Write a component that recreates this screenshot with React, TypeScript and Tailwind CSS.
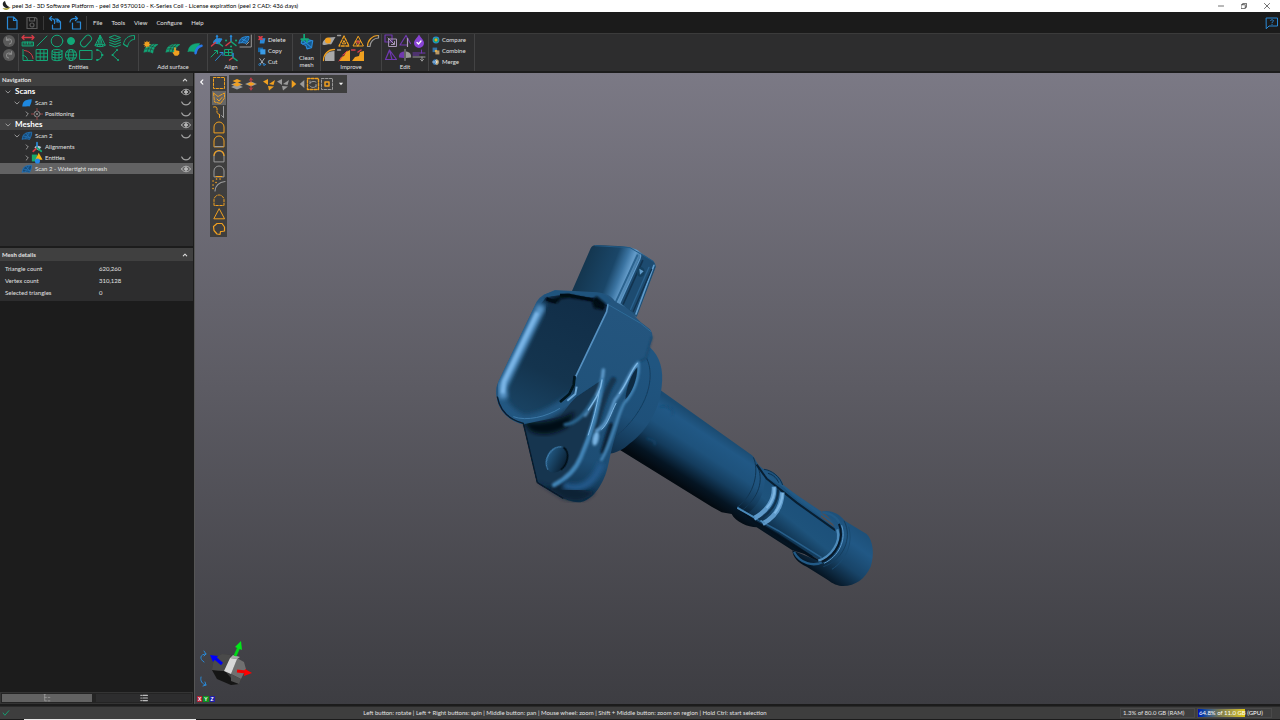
import { useState } from 'react';
import type { ReactNode } from 'react';

const GREEN = '#12a878';
const ORANGE = '#f0a020';
const BLUE = '#2a8ad8';
const GRAY = '#9a9a9a';
const RED = '#d83c48';
const PURPLE = '#7038b0';

type IconProps = { children: ReactNode; className?: string; color?: string; width?: number };

function Icon({ children, className = 'size-3.5', color = GREEN, width = 1 }: IconProps) {
	return (
		<svg
			aria-hidden="true"
			className={`${className} shrink-0`}
			fill="none"
			stroke={color}
			strokeLinecap="round"
			strokeLinejoin="round"
			strokeWidth={width}
			viewBox="0 0 14 14"
		>
			{children}
		</svg>
	);
}

type Tool = { name: string; icon: ReactNode };

const entityTools: Tool[] = [
	{
		name: 'Distance',
		icon: (
			<Icon>
				<path d="M1 3.500h12M3 1.500l-2 2 2 2M11 1.500l2 2-2 2" stroke={RED} strokeWidth="1.300" />
				<path d="M1.500 8h11v4h-11zM4 8v2M6.500 8v2M9 8v2" fill="#12a87855" />
			</Icon>
		)
	},
	{ name: 'Line', icon: <Icon><path d="M2 12L12 2" /></Icon> },
	{ name: 'Circle', icon: <Icon><circle cx="7" cy="7" r="5.800" /></Icon> },
	{ name: 'Point', icon: <Icon><circle cx="7" cy="7" fill={GREEN} r="3.500" /></Icon> },
	{
		name: 'Slot',
		icon: <Icon><rect height="6.800" rx="3.400" transform="rotate(-48 7 7)" width="13" x=".5" y="3.600" /></Icon>
	},
	{ name: 'Cone', icon: <Icon><path d="M7 1.500L2 11.500c2 1.600 8 1.600 10 0zM7 1.500v11M7 1.500L4.500 12M7 1.500L9.500 12M2 11c3-1 7-1 10 0" /></Icon> },
	{ name: 'Planes', icon: <Icon><path d="M7 1.500l5.500 2L7 5.500 1.500 3.500zM1.500 6L7 8l5.500-2M1.500 8.500L7 10.500l5.500-2M1.500 11L7 13l5.500-2" /></Icon> },
	{ name: 'Curve', icon: <Icon><path d="M1.500 10C2.500 4.500 6 1.500 12.500 1.500v4C9 5.500 6.500 8 5.500 12.500zM1.500 10l4 2.500" /></Icon> },
	{
		name: 'Angle',
		icon: (
			<Icon>
				<path d="M2 1.500v11h10M2 7.500c2.500 0 4.500 2 4.500 5" />
				<path d="M3.500 2.500C8 3 11.500 6 12 10.500" stroke={RED} />
			</Icon>
		)
	},
	{ name: 'Grid', icon: <Icon><path d="M1.500 1.500h11v11h-11zM5.200 1.500v11M8.900 1.500v11M1.500 5.200h11M1.500 8.900h11" /></Icon> },
	{ name: 'Cylinder', icon: <Icon><path d="M2 3v8.500c2 1.600 8 1.600 10 0V3M2 6c2 1.400 8 1.400 10 0M2 9c2 1.400 8 1.400 10 0M5 4v8.500M9 4v8.500" /><ellipse cx="7" cy="3" rx="5" ry="1.500" /></Icon> },
	{ name: 'Sphere', icon: <Icon><circle cx="7" cy="7" r="5.600" /><ellipse cx="7" cy="7" rx="2.500" ry="5.600" /><path d="M1.400 7h11.200M2.400 4h9.200M2.400 10h9.200" /></Icon> },
	{ name: 'Rectangle', icon: <Icon><path d="M1 2.500h12v9H1z" /></Icon> },
	{ name: 'Arc', icon: <Icon><path d="M4.500 2c6 1 6 9 0 10" /><path d="M4 2h.5M9 7h.5M4 12h.5" strokeWidth="2" /></Icon> },
	{ name: 'Polyline', icon: <Icon><path d="M9 2L4.500 7 10 12" /><path d="M9 2h.1M4.500 7h.1M10 12h.1" strokeWidth="2" /></Icon> }
];

const patch = 'M1 10.500C1.500 5.500 5 3 13 4c-2.500 1-4 4-4.500 7.500-2-1.500-5-1.500-7.500-1z';
const patchLines = 'M2 8c3-.7 5-.2 7 .8M3.500 5.500c3-.5 5 0 7 1M3.700 10.500c.5-3 2-5.500 4.500-7M6.200 10.500c.5-3 2-5.500 4.500-7';

const surfaceTools: Tool[] = [
	{
		name: 'Auto surface',
		icon: (
			<Icon className="size-4" width={0.5}>
				<path d={patch} fill={GREEN} />
				<path d={patchLines} stroke="#2d2d2e" />
				<path d="M3.500.500l.7 1.500 1.700-.8-.6 1.800 1.600.7-1.600.8.5 1.700-1.700-.7-.8 1.500-.7-1.600-1.600.5.700-1.600L0 3.700l1.700-.7-.6-1.700 1.600.7z" fill={ORANGE} stroke="none" />
			</Icon>
		)
	},
	{
		name: 'Manual surface',
		icon: (
			<Icon className="size-4" width={0.5}>
				<path d={patch} fill={GREEN} />
				<path d={patchLines} stroke="#2d2d2e" />
				<path d="M8 6.500h1.500v2.500l3 .7v2.500l-1.500 1.500H8.500L6.500 11l1.500-.5z" fill={ORANGE} stroke="none" />
			</Icon>
		)
	},
	{
		name: 'Surface edge',
		icon: (
			<Icon className="size-4">
				<path d="M1 10C1.500 5.500 4 3 11 3L8 11c-2-1-5-1.500-7-1z" fill={GREEN} strokeWidth="0.500" />
				<path d="M7.500 11.500C8 8 10 5.500 12.700 5" stroke="#2878e8" strokeWidth="2.200" />
			</Icon>
		)
	}
];

const alignTools: Tool[] = [
	{
		name: 'Best fit',
		icon: (
			<Icon>
				<path d="M3.500 8.500C4 5 7 4 12 5L9 9.500z" fill={BLUE} stroke={BLUE} />
				<path d="M7 2v6" stroke={BLUE} strokeWidth="1.500" /><path d="M5.500 8.500L1.500 12" stroke={RED} strokeWidth="1.500" /><path d="M8.500 9l4 3" strokeWidth="1.500" />
				<path d="M5.500 3L7 .500 8.500 3z" fill={BLUE} stroke="none" />
			</Icon>
		)
	},
	{
		name: 'Datum',
		icon: (
			<Icon>
				<path d="M7 2v5.500" stroke={BLUE} strokeWidth="1.500" /><path d="M7 7.500l-5 4" stroke={RED} strokeWidth="1.500" /><path d="M7 7.500l5 4" stroke={GREEN} strokeWidth="1.500" />
				<path d="M2 6.500h.1M12 6.500h.1M7 12.500h.1" stroke={GREEN} strokeWidth="2" /><path d="M5.500 3L7 .500 8.500 3z" fill={BLUE} stroke="none" />
			</Icon>
		)
	},
	{
		name: 'Mesh alignment',
		icon: (
			<Icon color={BLUE}>
				<path d="M1 9C1.500 4.500 4 2.500 11 2.500c0 3-1 5-3 7-2-1-4-1-7-.5zM4 5l5 2.500M3.500 8.500l5-5" fill="#1c5c94" />
				<path d="M13.300 1v12H2M8.500 10.500l2.500-2.500" stroke={GRAY} />
			</Icon>
		)
	},
	{
		name: 'Vectors',
		icon: (
			<Icon>
				<path d="M1 9L7 3M4.500 2.500H7.500v3" />
				<path d="M5.500 12.500l7-7.500M10 4.500h3v3" stroke={BLUE} />
			</Icon>
		)
	},
	{
		name: 'Grid alignment',
		icon: (
			<Icon>
				<path d="M1 1.500h7v6H1zM4.500 1.500v6M1 4.500h7" />
				<path d="M9 5.500v4" stroke={BLUE} strokeWidth="1.500" /><path d="M9 9.500L5.500 12" stroke={RED} strokeWidth="1.500" /><path d="M9 9.500l4 3" strokeWidth="1.500" />
			</Icon>
		)
	}
];

const improveTools: Tool[] = [
	{ name: 'Defeature', icon: <Icon><path d="M.5 10.500C.5 6 4 3 13.500 3c-2 3-3 6-4.500 7.500-3-1-5 1.500-8.500 0z" fill="#a5a5a5" stroke="none" /><circle cx="6" cy="6.500" fill={ORANGE} r="3" stroke="none" /></Icon> },
	{ name: 'Decimate', icon: <Icon><path d="M7 2L2 12h10z" stroke={ORANGE} strokeDasharray="3 1.500" strokeWidth="1.300" /><path d="M5.500 9.500L7 6.500l1.500 3z" stroke={ORANGE} /><path d="M.5 1.500h3" stroke={GRAY} strokeWidth="1.500" /></Icon> },
	{ name: 'Refine', icon: <Icon color={ORANGE}><path d="M7 2.500L2 12h10zM4.500 7.200h5L7 12z" /><path d="M7 6.500v3M5.500 8h3" stroke={RED} /></Icon> },
	{ name: 'Smooth', icon: <Icon color={ORANGE} width={1.2}><path d="M1.500 12.500C1.500 6.500 6 1.500 12.500 1.500" /><path d="M4 12.500c0-5 4-8.500 8.500-8.500M1.500 12.500H4M12.500 1.500V4" stroke={GRAY} /></Icon> },
	{ name: 'Fill', icon: <Icon><path d="M3 13V9c0-3 4-6 9.500-6v10z" fill="#a8a8a8" stroke="none" /><path d="M1.500 12.500C1.500 6.500 6 1.500 12.500 1.500" stroke={ORANGE} strokeWidth="1.300" /></Icon> },
	{ name: 'Extrude', icon: <Icon><path d="M2 13l2-4 3-1 2-4 4-2v11z" fill={ORANGE} stroke="none" /><path d="M.5 2h3" stroke={GRAY} strokeWidth="1.500" /><path d="M6 7l4-4M6 7l1.500-.2M2 13l3-4" stroke={RED} /></Icon> },
	{ name: 'Offset', icon: <Icon><path d="M1 13l3-4 4-1 1-4 4-1v10z" fill={ORANGE} stroke="none" /><path d="M.5 2h3.500M7 4l3-2" stroke={RED} strokeWidth="1.500" /></Icon> }
];

const editTools: Tool[] = [
	{ name: 'Scale', icon: <Icon color={PURPLE} width={1.2}><path d="M1 1h7v7H1z" /><path d="M5 5h7.500v7.500H5zM4 4l6 6M7.500 10.500h3v-3" stroke="#a896b8" strokeWidth="1" /></Icon> },
	{ name: 'Cut plane', icon: <Icon color={PURPLE} width={1.2}><path d="M8 1.500L2 11h7M8 1.500l4.500 8" /><path d="M9.500 4.500v8" stroke="#b0a0bc" /></Icon> },
	{ name: 'Watertight', icon: <Icon><path d="M7 .500C9 4 12 6 12 9a5 5 0 0 1-10 0C2 6 5 4 7 .500z" fill="#8844d4" stroke="none" /><path d="M5 8.500L6.500 10 9 7" stroke="#fff" strokeWidth="1.300" /></Icon> },
	{ name: 'Remesh', icon: <Icon color={PURPLE} width={1.2}><path d="M5.500 2L1.500 11.500h11zM5.500 2l2.500 9.500" /></Icon> },
	{ name: 'Mirror', icon: <Icon><path d="M6 3.500C2 4 .5 6.500 1 9.500L6 10z" fill={PURPLE} stroke="none" /><path d="M8 3.500c4 .5 5.500 3 5 6L8 10z" fill={GRAY} stroke="none" /><path d="M7 1.500v11" stroke={GRAY} /></Icon> },
	{ name: 'Shell', icon: <Icon color={PURPLE}><path d="M1 5h12M9.500 2v3M1 7h6" /><path d="M1 9h12M10 9v4M8.500 11.500L10 13l1.500-1.500" stroke={GRAY} /></Icon> }
];

const clipboard: Tool[] = [
	{ name: 'Delete', icon: <Icon className="size-2"><path d="M4 4h9l-2 9H3z" fill={BLUE} stroke="none" /><path d="M2 1l5 5M7 1L2 6" stroke={RED} strokeWidth="3" /></Icon> },
	{ name: 'Copy', icon: <Icon className="size-2"><path d="M0 1h9v8H0z" fill="#1868a8" stroke="none" /><path d="M4 4h9v9H4z" fill="#3a9ce8" stroke="none" /></Icon> },
	{ name: 'Cut', icon: <Icon className="size-2" color="#c0c8d0" width={1.5}><path d="M3 1l6.500 9M11 1L4.500 10" /><circle cx="3" cy="11.500" r="1.700" stroke={BLUE} /><circle cx="11" cy="11.500" r="1.700" stroke={BLUE} /></Icon> }
];

const combineTools: Tool[] = [
	{ name: 'Compare', icon: <Icon className="size-2"><circle cx="7" cy="7" fill={BLUE} r="6" stroke="none" /><circle cx="7" cy="7" fill={GREEN} r="4.500" stroke="none" /><circle cx="7" cy="7" fill={ORANGE} r="2.500" stroke="none" /></Icon> },
	{ name: 'Combine', icon: <Icon className="size-2"><path d="M1 1h8v8H1z" fill="#3272a8" stroke="none" /><path d="M6 6h7v7H6z" fill="#b89868" stroke="none" /><path d="M5 5h4v4H5z" fill="#e0b050" stroke="none" /></Icon> },
	{ name: 'Merge', icon: <Icon className="size-2"><circle cx="6" cy="7" fill="#3c7cb8" r="5" stroke="none" /><path d="M7 2a5 5 0 0 1 0 10z" fill="#c0a878" stroke="none" /><path d="M1 7h8M6 4l3 3-3 3" stroke="#fff" /></Icon> }
];

const arch = 'M2 12.500V7a5 5 0 0 1 10 0v5.500z';

const selectTools: Tool[] = [
	{ name: 'Rectangle selection', icon: <Icon color={ORANGE}><path d="M1.500 1.500h11v11h-11z" strokeDasharray="2.500 1.500" /></Icon> },
	{ name: 'Freeform selection', icon: <Icon color={ORANGE}><path d="M1.500 2l4.500 3.500L12.500 2v5l-4 5.500-6-1.500z" strokeDasharray="2.500 1.200" /><path d="M5 8l2 2 3-3.500" /></Icon> },
	{ name: 'Path selection', icon: <Icon color={ORANGE}><path d="M1.500 2c3-1 4 1 3.500 3.500S6 9 7.500 9.500" strokeDasharray="2.500 1" /><path d="M7.500 9.500v3" /><path d="M11.500 1.500v11M9.500 10.500l2 2" stroke={GRAY} /></Icon> },
	{ name: 'Select front', icon: <Icon color={ORANGE}><path d={arch} /></Icon> },
	{ name: 'Select through', icon: <Icon color={ORANGE}><path d={arch} /><path d="M3 12.500h8" stroke={GRAY} /></Icon> },
	{ name: 'Select top', icon: <Icon color={GRAY}><path d={arch} /><path d="M2 6.500a5 5 0 0 1 10 0" stroke={ORANGE} strokeWidth="1.200" /></Icon> },
	{ name: 'Select base', icon: <Icon color={GRAY}><path d={arch} /><path d="M4 12.500h6" stroke={ORANGE} /></Icon> },
	{ name: 'Select by curvature', icon: <Icon color={GRAY} width={1.2}><path d="M3 13c0-5 4-9 10-9.500" /><path d="M1 3h.1M4.500 1h.1M8 1h.1M1 7h.1M4 4.500h.1M1 10.500h.1" stroke={ORANGE} strokeWidth="1.600" /></Icon> },
	{ name: 'Select boundary', icon: <Icon color={ORANGE}><path d={arch} strokeDasharray="2.500 1.500" /></Icon> },
	{ name: 'Select triangle', icon: <Icon color={ORANGE}><path d="M7 2L1.800 11.800h10.400z" /></Icon> },
	{ name: 'Select component', icon: <Icon color={ORANGE} width={1.2}><path d="M8 12.500l-3-.5-3-3.500L1.500 4.500 5 1.500h5L12.500 5v4L10 9.500H8.500z" /></Icon> }
];

const viewTools: Tool[] = [
	{ name: 'Expand layers', icon: <Icon><path d="M1 7.500L7 5l6 2.500L7 10zM1 10L7 7.500 13 10l-6 2.500z" fill={GRAY} stroke="none" /><path d="M2.500 4L7 2l4.500 2L7 6zM2.500 7.500L7 5.500l4.500 2-4.500 2z" fill={ORANGE} stroke="none" /></Icon> },
	{ name: 'Shrink layers', icon: <Icon><path d="M1 7l6-2.500L13 7l-6 2.500z" fill={GRAY} stroke="none" /><path d="M3 7l4-2 4 2-4 2z" fill={ORANGE} stroke="none" /><path d="M7 1v4M5.500 3L7 1.500 8.500 3M7 9v4M5.500 11L7 12.500 8.500 11" stroke={RED} /></Icon> },
	{ name: 'Grow', icon: <Icon><path d="M1 4.500L6 2v6zM7 7l6-4-1.500 5zM6 9l6 .5-5 4z" fill={ORANGE} stroke="none" /></Icon> },
	{ name: 'Reduce', icon: <Icon><path d="M1 4.500L6 2v6zM7 7l6-4-1.500 5zM6 9l6 .5-5 4z" fill={GRAY} stroke="none" /></Icon> }
];

const menus = ['File', 'Tools', 'View', 'Configure', 'Help'];

function ToolButton({ tool }: { tool: Tool }) {
	return (
		<button aria-label={tool.name} className="flex items-center justify-center hover:bg-white/10" type="button">
			{tool.icon}
		</button>
	);
}

function Group({ label, className, children }: { label?: string; className: string; children: ReactNode }) {
	return (
		<section className={`flex flex-col items-center border-r border-[#434344] ${className}`}>
			{children}
			{label && <h2 className="mt-auto text-[6px] leading-2">{label}</h2>}
		</section>
	);
}

function TitleBar() {
	return (
		<header className="flex h-3 items-center bg-white pl-px text-black">
			<svg aria-hidden="true" className="size-2.5" viewBox="0 0 10 10">
				<path d="M4 0C1 1 1 5 4 6.500 6 7.500 8 7 9.500 6 6.500 6 5 3.500 4 0z" fill="#222" />
				<path d="M1.500 7c2 3 6 2.500 8-1C7 7.500 4 7.500 1.500 7z" fill="#a9a030" />
			</svg>
			<h1 className="pl-px text-[6px] leading-3">
				peel 3d - 3D Software Platform - peel 3d 9570010 - K-Series Coil - License expiration (peel 2 CAD: 436 days)
			</h1>
			<div className="ml-auto flex gap-[17px] pr-2.5">
				<button aria-label="Minimize" type="button"><Icon className="size-1.5" color="#222" width={1.5}><path d="M1 7h12" /></Icon></button>
				<button aria-label="Restore" type="button"><Icon className="size-1.5" color="#222" width={1.5}><path d="M1 4h9v9H1zM4 4V1h9v9h-3" /></Icon></button>
				<button aria-label="Close" type="button"><Icon className="size-1.5" color="#222" width={1.5}><path d="M1 1l12 12M13 1L1 13" /></Icon></button>
			</div>
		</header>
	);
}

function MenuBar() {
	return (
		<nav className="flex h-[21px] items-center bg-[#1b1b1b] pl-[5px]">
			<button aria-label="New" type="button"><Icon color={BLUE} width={1.2}><path d="M2.500 1h6l3.500 3.500V13h-9.500zM8.500 1v3.500H12" /></Icon></button>
			<button aria-label="Save" className="ml-1.5" type="button"><Icon color="#5a5a5a" width={1.2}><path d="M2 1.500h8.500L12 3v9.500H2zM4.500 1.500v3.500h5v-3.500" /><circle cx="7" cy="9" r="2" /></Icon></button>
			<span className="mx-1 h-3.5 w-px bg-[#3a3a3a]" />
			<button aria-label="Import" type="button"><Icon color={BLUE} width={1.2}><path d="M7 3h2.500L12.500 6v7H4.500V9M9 3v3h3.500" /><path d="M6.500 7.500c1-4-1-5-4.500-5M3.500.500l-2 2 2 2" /></Icon></button>
			<button aria-label="Export" className="ml-1.5" type="button"><Icon color={BLUE} width={1.2}><path d="M9 6h3.500v7H4.500V7" /><path d="M2 6c0-3 3-4 7-3.500M7.500.500l2 2-2 2" /></Icon></button>
			<span className="mx-1 h-3.5 w-px bg-[#3a3a3a]" />
			<ul className="flex gap-[9px] pl-0.5 text-[6px]">
				{menus.map(menu => (
					<li key={menu}><button type="button">{menu}</button></li>
				))}
			</ul>
			<button aria-label="Help and feedback" className="ml-auto pr-px" type="button">
				<Icon color={BLUE}><path d="M1.500 2h11v8H4l-2.500 2.500z" /><path d="M5.500 4.500c0-1 3-1 3 .3 0 1-1.500.7-1.500 2M7 8.500h.1" /></Icon>
			</button>
		</nav>
	);
}

function Ribbon() {
	return (
		<div className="flex h-[38px] border-t border-[#3b3b3b] bg-[#2d2d2e]">
			<div className="flex w-[19px] flex-col items-center gap-0.5 border-r border-[#434344] pt-px">
				{['Undo', 'Redo'].map(name => (
					<button aria-label={name} className="size-3 rounded-full bg-[#5a5a5a]" key={name} type="button">
						<Icon className={name === 'Redo' ? 'size-3 -scale-x-100' : 'size-3'} color="#8c8c8c" width={1.2}>
							<path d="M4 3v3h3M4 6c2-2.500 6-1.500 6 1.500 0 1.500-1 2.500-2.500 3" />
						</Icon>
					</button>
				))}
			</div>
			<Group className="w-[120px]" label="Entities">
				<div className="grid w-[116px] grid-cols-8">
					{entityTools.map(tool => <ToolButton key={tool.name} tool={tool} />)}
				</div>
			</Group>
			<Group className="w-[69px]" label="Add surface">
				<div className="flex gap-1.5 pt-1.5">
					{surfaceTools.map(tool => <ToolButton key={tool.name} tool={tool} />)}
				</div>
			</Group>
			<Group className="w-[47px]" label="Align">
				<div className="grid w-[43px] grid-cols-3">
					{alignTools.map(tool => <ToolButton key={tool.name} tool={tool} />)}
				</div>
			</Group>
			<Group className="w-[38px]">
				<TextTools tools={clipboard} />
			</Group>
			<Group className="w-7">
				<button className="flex flex-col items-center text-[6px] leading-[7px]" type="button">
					<Icon className="size-4" color={BLUE}>
						<path d="M2 8c0-4 4-4 10-2l-1 6-4 1-1-3zM4 6l6 5M3 9l7-3" fill="#15588e" />
						<path d="M4.500 0v5M2 4.500h6M3 6V5h4v2" stroke={GREEN} strokeWidth="1.500" />
					</Icon>
					<span className="mt-1 w-6">Clean mesh</span>
				</button>
			</Group>
			<Group className="w-[61px]" label="Improve">
				<div className="grid w-[58px] grid-cols-4">
					{improveTools.map(tool => <ToolButton key={tool.name} tool={tool} />)}
				</div>
			</Group>
			<Group className="w-[47px]" label="Edit">
				<div className="grid w-[43px] grid-cols-3">
					{editTools.map(tool => <ToolButton key={tool.name} tool={tool} />)}
				</div>
			</Group>
			<Group className="w-[46px]">
				<TextTools tools={combineTools} />
			</Group>
		</div>
	);
}

function TextTools({ tools }: { tools: Tool[] }) {
	return (
		<ul className="w-full pl-[3px] text-[6px] leading-[11px]">
			{tools.map(tool => (
				<li key={tool.name}>
					<button className="flex items-center gap-0.5" type="button">
						{tool.icon}
						{tool.name}
					</button>
				</li>
			))}
		</ul>
	);
}

type Node = { label: string; icon?: ReactNode; depth: number; open?: boolean; eye?: 'open' | 'closed'; style?: string };

const meshIcon = (
	<Icon className="size-3" color="#2472b4">
		<path d="M1.500 10.500C2 5 4 3 12.500 2.500c0 3-1 6-2.500 8.500-3-1-5-.5-8.500-.5zM3 7l7 2M6 4l4 5M5 10l5-7" fill="#174c7a" />
	</Icon>
);

const nodes: Node[] = [
	{ label: 'Scans', depth: 0, open: true, eye: 'open' },
	{
		label: 'Scan 2',
		depth: 1,
		open: true,
		eye: 'closed',
		icon: <Icon className="size-3"><path d="M1.500 11C2 6 3 3 12.500 2.500c0 3-1 6-2.500 8.500-3-1-5 .5-8.500 0z" fill="#1e88e0" stroke="none" /></Icon>
	},
	{
		label: 'Positioning',
		depth: 2,
		open: false,
		eye: 'closed',
		icon: <Icon className="size-3" color="#888"><circle cx="7" cy="7" r="3.500" /><path d="M5.500 5.500l3 3M8.500 5.500l-3 3" /><path d="M7 .500v3M7 10.500v3M.500 7h3M10.500 7h3" stroke="#a84848" /></Icon>
	},
	{ label: 'Meshes', depth: 0, open: true, eye: 'open', style: 'bg-[#424243]' },
	{ label: 'Scan 2', depth: 1, open: true, eye: 'closed', icon: meshIcon },
	{
		label: 'Alignments',
		depth: 2,
		open: false,
		icon: <Icon className="size-3"><path d="M4 8c1-3 4-3 8-1L9 11z" fill="#b8c4d0" stroke="none" /><path d="M7 2v6" stroke={BLUE} strokeWidth="2" /><path d="M7 8l-4.500 4" stroke={RED} strokeWidth="2" /><path d="M7 8l5 4" stroke={GREEN} strokeWidth="2" /></Icon>
	},
	{
		label: 'Entities',
		depth: 2,
		open: false,
		eye: 'closed',
		icon: <Icon className="size-3"><path d="M1 3h6v8H1z" fill="#18a86c" stroke="none" /><path d="M9 1l4.500 8H5z" fill="#f8b418" stroke="none" /><circle cx="7.500" cy="10.500" fill="#2488e8" r="3" stroke="none" /></Icon>
	},
	{ label: 'Scan 2 - Watertight remesh', depth: 1, eye: 'open', icon: meshIcon }
];

const indents = ['pl-1', 'pl-[13px]', 'pl-[23px]'];

function Chevron({ open }: { open?: boolean }) {
	if (open === undefined) return <span className="w-2" />;
	return (
		<Icon className="mx-px size-1.5" color="#a8a8a8" width={2}>
			<path d={open ? 'M2 4.500l5 5 5-5' : 'M5 2l5 5-5 5'} />
		</Icon>
	);
}

function TreeRow({ node, selected, onSelect }: { node: Node; selected: boolean; onSelect: () => void }) {
	const background = selected ? 'bg-[#626263]' : (node.style ?? '');
	return (
		<li className={`flex h-[11px] items-center pr-0.5 ${indents[node.depth]} ${background}`}>
			<Chevron open={node.open} />
			<button
				className={`flex flex-1 items-center gap-0.5 text-left leading-[11px] ${node.depth === 0 ? 'pl-[3px] text-[8px] font-bold text-white' : 'text-[6px]'}`}
				onClick={onSelect}
				type="button"
			>
				{node.icon}
				{node.label}
			</button>
			{node.eye && (
				<button aria-label="Toggle visibility" type="button">
					<Icon className="size-2.5" color={node.eye === 'open' ? '#b8b8b8' : '#a0a0a0'} width={1.3}>
						{node.eye === 'open' ? (
							<>
								<path d="M.700 7C3.500 1.800 10.500 1.800 13.300 7 10.500 12.200 3.500 12.200.700 7z" />
								<circle cx="7" cy="7" fill="#b8b8b8" r="2" />
							</>
						) : (
							<path d="M1 5.500c2.500 5.500 9.500 5.500 12 0" strokeWidth="1.600" />
						)}
					</Icon>
				</button>
			)}
		</li>
	);
}

function PanelHeader({ title }: { title: string }) {
	return (
		<div className="flex h-[13px] items-center justify-between bg-[#404040] pr-[5px] pl-0.5">
			<h2 className="text-[6px] leading-3 font-bold">{title}</h2>
			<button aria-label={`Collapse ${title}`} className="flex" type="button">
				<Icon className="size-1.5" color="#ddd" width={2.5}><path d="M3 9l4-4 4 4" /></Icon>
			</button>
		</div>
	);
}

const details = [
	['Triangle count', '620,260'],
	['Vertex count', '310,128'],
	['Selected triangles', '0']
];

function Sidebar() {
	const [selected, setSelected] = useState(7);

	return (
		<aside className="flex w-[193px] shrink-0 flex-col">
			<section className="h-[173px] bg-[#2d2d2e]">
				<PanelHeader title="Navigation" />
				<ul>
					{nodes.map((node, i) => (
						<TreeRow key={i} node={node} onSelect={() => setSelected(i)} selected={selected === i} />
					))}
				</ul>
			</section>
			<section className="mt-0.5 bg-[#2d2d2e] pb-0.5">
				<PanelHeader title="Mesh details" />
				<table className="mt-0.5 w-full text-[6px] leading-3">
					<tbody>
						{details.map(([label, value]) => (
							<tr key={label}>
								<th className="w-[99px] py-0 pl-[5px] text-left font-normal" scope="row">{label}</th>
								<td>{value}</td>
							</tr>
						))}
					</tbody>
				</table>
			</section>
			<div className="mt-auto flex h-3 gap-1 border border-[#343434] bg-[#242424] p-px">
				<button aria-label="Tree view" className="flex w-[90px] items-center justify-center bg-[#626262]" type="button">
					<Icon className="size-2" color="#999" width={1.5}><path d="M3 1v11h3M3 6h3M9 6h3M9 12h3M2 1h2" /></Icon>
				</button>
				<button aria-label="List view" className="flex flex-1 items-center justify-center bg-[#2d2d2e]" type="button">
					<Icon className="size-2" color="#bbb" width={2}><path d="M1.500 2.500h1M5 2.500h8M1.500 7h1M5 7h8M1.500 11.500h1M5 11.500h8" /></Icon>
				</button>
			</div>
		</aside>
	);
}

function Shaft() {
	return (
		<g transform="translate(640 370) scale(.3333)">
			<path d="M-60 -30L65 63L335 255C350 268 345 280 372 298C400 303 425 320 430 348L470 375L545 425L520 560L457 541L350 472C325 472 285 455 275 432L245 427L215 410L-60 240Z" fill="url(#tube)" />
			<path d="M340 262C358 300 345 375 290 413M350 284C375 330 355 385 305 422" fill="none" stroke="#113552" strokeWidth="3" />
			<path d="M375 320C375 370 355 410 315 435L345 455L370 465L415 490L540 572C580 550 600 510 588 475L475 392L430 352Z" fill="url(#window)" />
			<path d="M350 284L380 326L425 362L470 398L588 482" fill="none" stroke="#081e31" strokeWidth="6" />
			<path d="M378 314L430 348L472 380L588 465" fill="none" stroke="#235a85" strokeWidth="5" />
			<path d="M290 412L345 455L405 492L540 577" fill="none" stroke="#04121f" strokeWidth="7" />
			<path d="M292 412L350 447L415 482L545 563" fill="none" stroke="#275f8b" strokeWidth="5" />
			<path d="M372 298C395 300 420 320 428 345M384 310C403 315 412 328 416 338" fill="none" stroke="#0d304c" strokeWidth="3" />
			<g fill="none" filter="url(#soft1)" stroke="#5f9aca">
				<path d="M402 350C405 390 380 425 342 445" strokeWidth="14" />
				<path d="M427 367C425 408 405 442 368 461" strokeWidth="14" />
			</g>
			<g fill="none" filter="url(#soft1)" stroke="#7db6e3" strokeWidth="6">
				<path d="M403 352C405 378 394 398 380 414" />
				<path d="M428 369C427 395 416 414 404 430" />
			</g>
			<path d="M414 358C416 396 392 430 356 450" fill="none" stroke="#10314d" strokeWidth="6" />
			<path d="M292 414L345 443M362 452L374 459" fill="none" filter="url(#soft1)" stroke="#4c8aba" strokeWidth="5" />
			<path d="M545 425C570 417 600 432 614 452L680 492C700 512 704 555 692 590C674 630 640 652 598 647C580 644 568 633 560 628L500 590C475 580 458 562 457 541L545 577C600 540 605 460 545 425Z" fill="url(#cap)" />
			<g fill="none">
				<path d="M462 546C480 580 520 592 550 575" stroke="#225a86" strokeWidth="7" />
				<path d="M547 427C575 430 596 445 602 470" stroke="#225a86" strokeWidth="7" />
				<path d="M592 478C604 515 575 560 535 572" filter="url(#soft1)" stroke="#4d8bbb" strokeWidth="7" />
				<path d="M597 462C615 505 590 555 545 576" stroke="#07192a" strokeWidth="6" />
				<path d="M605 466C620 510 596 560 552 580" filter="url(#soft1)" stroke="#5c9acb" strokeWidth="3" />
				<path d="M612 452C640 505 608 572 550 590" stroke="#143d5e" strokeWidth="3" />
				<path d="M626 470C640 520 619 570 576 598" stroke="#1a4a70" strokeWidth="3" />
			</g>
			<path d="M60 110C85 105 105 120 96 135M20 205C45 210 50 220 42 225" fill="none" filter="url(#soft3)" stroke="#174b75" strokeWidth="4" />
		</g>
	);
}

function Housing() {
	return (
		<g transform="translate(480 230) scale(.3333)">
			<path d="M508 350C540 378 552 420 545 470C538 550 490 610 450 640C430 660 405 670 385 672L330 560L470 350Z" fill="url(#collar)" />
			<path d="M500 385C527 440 505 540 405 622" fill="none" filter="url(#soft1)" stroke="#143d5f" strokeWidth="3" />
			<path d="M276 183L332 55Q337 45 350 45L430 49C452 51 470 57 480 66L518 92Q530 100 526 114L470 262L380 205Z" fill="url(#plug)" />
			<path d="M484 72L521 96L527 110L470 258L420 218Z" fill="#1d4b70" />
			<g fill="none" strokeLinecap="round">
				<path d="M481 72Q484 78 480 86L420 218" filter="url(#soft1)" stroke="#5e99c9" strokeWidth="4" />
				<path d="M472 76L408 215" filter="url(#soft1)" stroke="#2c638f" strokeWidth="6" />
				<path d="M488 92L430 222" stroke="#12334f" strokeWidth="5" />
				<path d="M522 106L468 252" filter="url(#soft1)" stroke="#5f9bcc" strokeWidth="5" />
				<path d="M507 112L452 238" stroke="#2a628e" strokeWidth="4" />
				<path d="M515 118L460 244" stroke="#12324d" strokeWidth="4" />
				<path d="M345 47L450 53L520 94" stroke="#235a85" strokeWidth="3" />
			</g>
			<ellipse cx="482" cy="126" fill="#15405f" rx="12" ry="15" />
			<path d="M478 116L491 124L480 134Z" fill="#5f9bca" filter="url(#soft1)" />
			<path d="M190 195L225 180L350 187C380 190 395 200 405 214L440 235L482 276L510 298Q521 312 516 330L498 385L470 400L428 540L400 640C388 680 386 715 372 745C355 785 325 818 295 817C275 816 262 810 250 805L185 768Q174 764 170 754L130 583C85 572 55 540 50 500Q46 475 55 455L170 215Q178 202 190 195Z" fill="url(#side)" />
			<path d="M130 585L170 754L185 768L210 772C260 755 285 715 300 680C330 600 342 540 365 450L290 500C250 545 190 565 130 585Z" fill="#14344f" filter="url(#soft1)" />
			<path d="M172 756L250 805C290 820 320 810 345 785C310 780 270 770 250 755L210 772Z" fill="#0a2034" filter="url(#soft5)" />
			<path d="M130 574C180 585 235 570 285 545L262 590C230 612 180 620 150 602Z" fill="#040e18" filter="url(#soft5)" />
			<path d="M200 200L245 195L350 200L382 225L384 240L287 440L283 465L290 490C255 510 230 545 185 560C140 575 85 560 68 510L62 475L182 222Z" fill="url(#cavity)" />
			<g clipPath="url(#bodyClip)">
				<path d="M185 215L60 475C58 520 80 550 130 572C180 570 230 540 290 495" fill="none" filter="url(#soft5)" stroke="#235681" strokeWidth="34" />
				<path d="M185 228L118 365L68 468L70 505" fill="none" filter="url(#soft5)" stroke="#5b98ca" strokeWidth="24" />
				<path d="M172 248L120 355L72 455L68 490" fill="none" filter="url(#soft3)" stroke="#7ab5e6" strokeWidth="12" />
				<path d="M100 560C140 575 200 560 240 535" fill="none" filter="url(#soft1)" stroke="#3d79a8" strokeWidth="3" />
			</g>
			<path d="M190 195L225 182L350 188C375 191 385 200 392 215L378 225L345 203L240 193L205 200Z" fill="#1f547e" />
			<path d="M192 202L206 216L232 219L242 206L268 203L335 213L342 235L370 240L378 222L350 199L338 208L262 193L235 200L208 209Z" fill="#030c16" filter="url(#soft3)" />
			<path d="M240 196L268 196L338 210M345 215L370 236M200 207L228 216" fill="none" filter="url(#soft1)" stroke="#030c16" strokeWidth="9" />
			<path d="M384 224L380 245L287 440" fill="none" filter="url(#soft1)" stroke="#5590c0" strokeLinecap="round" strokeWidth="5" />
			<path d="M284 438L281 465L268 492L240 516" fill="none" filter="url(#soft1)" stroke="#06131f" strokeWidth="8" />
			<path d="M290 470L286 492L262 512" fill="none" filter="url(#soft1)" stroke="#6ba6d5" strokeWidth="6" />
			<path d="M385 224L482 280L513 305" fill="none" filter="url(#soft1)" stroke="#2e6a98" strokeWidth="3" />
			<path d="M516 320L498 385L470 400L428 530" fill="none" filter="url(#soft3)" stroke="#174265" strokeWidth="4" />
			<g fill="none" filter="url(#soft3)" strokeLinecap="round">
				<path d="M400 450C375 490 358 550 345 600" stroke="#123450" strokeWidth="18" />
				<path d="M370 420C367 470 350 500 315 555" stroke="#5f9ccd" strokeWidth="10" />
				<path d="M366 450C356 530 335 610 303 680C290 712 262 745 222 765" stroke="#4384b6" strokeWidth="13" />
				<path d="M345 500C315 555 290 580 255 584" stroke="#2c658f" strokeWidth="10" />
				<path d="M393 585C380 620 375 640 368 665" stroke="#0b2439" strokeWidth="14" />
				<path d="M475 398C450 420 435 475 405 510C390 545 380 590 350 602" stroke="#5e9bcd" strokeWidth="9" />
				<path d="M475 398C480 440 460 490 432 520C410 560 395 640 364 690" stroke="#4788ba" strokeWidth="8" />
			</g>
			<g fill="none" filter="url(#soft1)" stroke="#7fb9e6" strokeLinecap="round">
				<path d="M366 450C364 480 348 505 325 540" strokeWidth="4" />
				<path d="M472 400C450 425 440 465 418 490" strokeWidth="4" />
				<path d="M358 485C350 530 340 570 325 615" strokeWidth="3" />
				<path d="M408 520C392 550 385 580 365 598" strokeWidth="3" />
			</g>
			<path d="M472 412C472 450 455 490 436 508C438 475 455 430 472 412Z" fill="#0e2a43" filter="url(#soft1)" />
			<ellipse cx="347" cy="626" fill="#79b4e3" filter="url(#soft3)" rx="9" ry="22" transform="rotate(12 347 626)" />
			<path d="M365 700C345 750 310 790 250 765" fill="none" filter="url(#soft5)" stroke="#23598a" strokeWidth="22" />
			<g transform="rotate(28 230 688)">
				<ellipse cx="230" cy="688" fill="url(#hole)" rx="31" ry="42" />
				<path d="M232 647A31 42 0 0 1 256 710" fill="none" filter="url(#soft1)" stroke="#040e18" strokeWidth="5" />
				<path d="M226 648A31 42 0 0 0 222 728" fill="none" filter="url(#soft1)" stroke="#4683b2" strokeWidth="3" />
			</g>
			<path d="M52 500C60 545 90 570 130 580L172 758L250 805" fill="none" filter="url(#soft1)" stroke="#081a2a" strokeWidth="4" />
		</g>
	);
}

function Model() {
	return (
		<svg aria-label="K-Series Coil" className="absolute inset-0 size-full" role="img" viewBox="195 73 1085 631">
			<defs>
				<filter id="soft1"><feGaussianBlur stdDeviation="1.500" /></filter>
				<filter id="soft3"><feGaussianBlur stdDeviation="3.500" /></filter>
				<filter id="soft5"><feGaussianBlur stdDeviation="7" /></filter>
				<clipPath id="bodyClip"><path d="M190 195L390 190L384 240L290 440L290 495L240 560L130 583C85 572 55 540 50 500Q46 475 55 455L170 215Z" /></clipPath>
				<linearGradient gradientUnits="userSpaceOnUse" id="tube" x1="201" x2="93" y1="162" y2="328">
					<stop offset="0" stopColor="#1b4b71" />
					<stop offset=".15" stopColor="#215885" />
					<stop offset=".4" stopColor="#1e527c" />
					<stop offset=".62" stopColor="#143c5d" />
					<stop offset=".85" stopColor="#051523" />
					<stop offset="1" stopColor="#030a11" />
				</linearGradient>
				<linearGradient gradientUnits="userSpaceOnUse" id="window" x1="530" x2="450" y1="430" y2="530">
					<stop offset="0" stopColor="#1c507a" />
					<stop offset=".5" stopColor="#1e537c" />
					<stop offset="1" stopColor="#0d2c46" />
				</linearGradient>
				<linearGradient gradientUnits="userSpaceOnUse" id="cap" x1="655" x2="545" y1="475" y2="625">
					<stop offset="0" stopColor="#1d5079" />
					<stop offset=".25" stopColor="#215885" />
					<stop offset=".6" stopColor="#184468" />
					<stop offset="1" stopColor="#04111d" />
				</linearGradient>
				<linearGradient gradientUnits="userSpaceOnUse" id="collar" x1="520" x2="400" y1="400" y2="670">
					<stop offset="0" stopColor="#205580" />
					<stop offset=".6" stopColor="#1e5079" />
					<stop offset="1" stopColor="#102f4a" />
				</linearGradient>
				<linearGradient gradientUnits="userSpaceOnUse" id="plug" x1="310" x2="465" y1="105" y2="165">
					<stop offset="0" stopColor="#14364f" />
					<stop offset=".5" stopColor="#1a4668" />
					<stop offset=".68" stopColor="#3b74a2" />
					<stop offset=".8" stopColor="#639bc9" />
					<stop offset="1" stopColor="#24587f" />
				</linearGradient>
				<linearGradient gradientUnits="userSpaceOnUse" id="side" x1="430" x2="290" y1="250" y2="800">
					<stop offset="0" stopColor="#24557e" />
					<stop offset=".5" stopColor="#20527a" />
					<stop offset=".8" stopColor="#1d4d74" />
					<stop offset="1" stopColor="#10314c" />
				</linearGradient>
				<linearGradient gradientUnits="userSpaceOnUse" id="cavity" x1="290" x2="130" y1="210" y2="570">
					<stop offset="0" stopColor="#112e48" />
					<stop offset=".6" stopColor="#14344e" />
					<stop offset="1" stopColor="#1a4566" />
				</linearGradient>
				<linearGradient id="hole">
					<stop offset="0" stopColor="#225983" />
					<stop offset="1" stopColor="#0a2033" />
				</linearGradient>
			</defs>
			<Shaft />
			<Housing />
		</svg>
	);
}

function Gizmo() {
	return (
		<div className="absolute bottom-0 left-0 w-[62px]">
			<svg aria-hidden="true" className="h-[54px] w-full" viewBox="0 0 62 54">
				<path d="M19 20L27 16 37 17 49 24 51 31 44 46 36 47 22 41 17 32z" fill="#3c3c3c" />
				<path d="M17 32L30 33 36 40 44 46 36 47 22 41z" fill="#151515" />
				<path d="M19 20L27 16 36 17 29 33 17 32z" fill="#4a4a4a" />
				<path d="M42 20L49 24 51 31 46 41 36 36z" fill="#707070" />
				<path d="M36 36L46 41 44 46 36 43z" fill="#505050" />
				<path d="M35 20L38 17 45 19 42 21z" fill="#aaa" />
				<path d="M35 20l7 1-6 15-7-3z" fill="#d8d8d8" />
				<path d="M40 18L44 9" stroke="#00d818" strokeWidth="3" />
				<path d="M40 9L46 3 47 12z" fill="#00e818" />
				<path d="M27 26L20 20" stroke="#0000f0" strokeWidth="3" />
				<path d="M15 17l8 1-5 6z" fill="#0000ff" />
				<path d="M42 33l9 1" stroke="#f00000" strokeWidth="3" />
				<path d="M50 31l7 4-8 3z" fill="#ff0000" />
				<path d="M9 24C4 21 5 16 11 16M9 13l2 3-2 2M6 39c-1 4 1 7 5 8M8 48l3-1-1-3" fill="none" stroke={BLUE} strokeLinecap="round" />
			</svg>
			<div className="mt-1 mb-0.5 ml-0.5 flex gap-px text-[5px] leading-[6px] font-bold text-white">
				<span className="bg-[#b02030] px-px">X</span>
				<span className="bg-[#109020] px-px">Y</span>
				<span className="bg-[#2020a8] px-px">Z</span>
			</div>
		</div>
	);
}

function Viewport() {
	const [tool, setTool] = useState('Freeform selection');

	return (
		<main className="relative flex-1 overflow-hidden border-l border-[#555] bg-linear-to-b from-[#7b7985] via-[#5c5b63] to-[#3d3d42]">
			<Model />
			<button aria-label="Hide panel" className="absolute top-1.5 left-1 flex" type="button">
				<Icon className="size-1.5" color="#fff" width={2.5}><path d="M9 2L4 7l5 5" /></Icon>
			</button>
			<div className="absolute top-[3px] left-[15px] flex h-[161px] w-[17px] flex-col items-center justify-between bg-[#3e3e3e] pb-px">
				{selectTools.map(item => (
					<button
						aria-label={item.name}
						className={item.name === tool ? 'bg-[#666]' : ''}
						key={item.name}
						onClick={() => setTool(item.name)}
						type="button"
					>
						{item.icon}
					</button>
				))}
			</div>
			<div className="absolute top-0.5 left-[34px] flex h-[18px] w-[118px] items-center bg-[#3e3e3e] pl-px">
				{viewTools.map((item, i) => (
					<span className={i === 2 ? 'ml-1 flex' : 'flex'} key={item.name}><ToolButton tool={item} /></span>
				))}
				<button aria-label="Next" type="button"><Icon className="h-3 w-2"><path d="M3 0l8 7-8 7z" fill={ORANGE} stroke="none" /></Icon></button>
				<button aria-label="Previous" type="button"><Icon className="h-3 w-2"><path d="M11 0L3 7l8 7z" fill={GRAY} stroke="none" /></Icon></button>
				<button aria-label="Select all" type="button"><Icon color={ORANGE}><path d="M1.500 1.500h11v11h-11z" strokeDasharray="2.500 1.500" strokeWidth="1.400" /><path d="M4 6c1-2 5-2 6-1M4 9c1 2 5 2 6 0M4 4v2.500M10 7.500V10" stroke={GRAY} /></Icon></button>
				<button aria-label="Invert" type="button"><Icon color={GRAY}><path d="M1.500 1.500h11v11h-11z" strokeDasharray="2.500 1.500" /><path d="M5 5h4v4H5z" stroke={ORANGE} strokeWidth="1.500" /></Icon></button>
				<button aria-label="More" className="mx-auto" type="button"><Icon className="size-1.5"><path d="M2 4h10l-5 6z" fill="#eee" stroke="none" /></Icon></button>
			</div>
			<Gizmo />
		</main>
	);
}

function StatusBar() {
	return (
		<footer className="flex h-[13px] shrink-0 items-center border-t border-[#2a2a2a] bg-[#3e3e3e] pr-2 text-[6px] leading-2">
			<Icon className="ml-0.5 size-2" width={1.5}><path d="M2 7l3 4 7-8" /></Icon>
			<p className="flex-1 text-center">
				Left button: rotate | Left + Right buttons: spin | Middle button: pan | Mouse wheel: zoom | Shift + Middle button: zoom on region | Hold Ctrl: start selection
			</p>
			<span className="w-[75px] border border-[#4a4a4a] pl-0.5">1.3% of 80.0 GB (RAM)</span>
			<span className="relative ml-0.5 w-[75px] border border-[#4a4a4a] pl-px">
				<span className="absolute inset-y-0 left-0 w-[65%] bg-linear-to-r from-[#0000b8] via-[#77774c] via-45% to-[#e0c800]" />
				<span className="relative text-white">64.8% of 11.0 GB (GPU)</span>
			</span>
		</footer>
	);
}

export default function App() {
	return (
		<div className="flex h-screen flex-col overflow-hidden bg-[#1c1c1c] font-['Lato','Open_Sans',sans-serif] text-[#e2e2e2]">
			<TitleBar />
			<MenuBar />
			<Ribbon />
			<div className="mt-0.5 flex min-h-0 flex-1 gap-px">
				<Sidebar />
				<Viewport />
			</div>
			<div className="h-0.5 shrink-0 bg-[#1c1c1c]" />
			<StatusBar />
			<div className="ml-6 h-px w-[172px] shrink-0 bg-[#e8e8e8]" />
		</div>
	);
}
